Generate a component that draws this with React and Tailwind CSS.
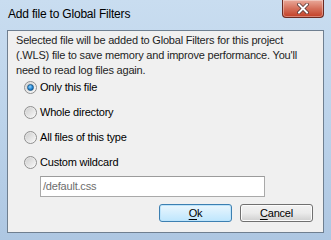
import { useState } from 'react';

const options = [
  'Only this file',
  'Whole directory',
  'All files of this type',
  'Custom wildcard',
];

function Radio({ checked }) {
  return (
    <span className="relative flex items-center justify-center w-[13px] h-[13px] rounded-full border border-[#8f8f8f] bg-gradient-to-br from-[#dcdcdc] to-[#fbfbfb]">
      <span className="w-[9px] h-[9px] rounded-full bg-gradient-to-br from-[#cfcfcf] to-[#f6f6f6]">
        {checked && (
          <span className="block m-[1px] w-[7px] h-[7px] rounded-full border border-[#1e5b8a] bg-[radial-gradient(circle_at_40%_35%,#8fd3ff,#1a7fd0_60%,#0d4f8f)]" />
        )}
      </span>
    </span>
  );
}

export default function App() {
  const [selected, setSelected] = useState(0);

  return (
    <div className="w-[331px] h-[240px] flex flex-col bg-gradient-to-b from-[#c9ddf0] via-[#bcd3ea] to-[#aec7e2] font-['Liberation_Sans',Arial,sans-serif] text-[11px] tracking-[-0.2px] text-black overflow-hidden">
      {/* Title bar */}
      <div className="h-[30px] flex items-start justify-between shrink-0">
        <span className="pl-[8px] pt-[6px] leading-[16px] text-[12px] tracking-[-0.2px] text-black">Add file to Global Filters</span>
        <div className="mr-[7px] w-[42px] h-[18px] flex items-center justify-center rounded-b-[4px] border border-t-0 border-[#6b2a22] bg-gradient-to-b from-[#e9a99a] via-[#d5705b] to-[#c23d24] shadow-[inset_0_0_0_1px_rgba(255,255,255,0.35)]">
          <svg width="12" height="11" viewBox="0 0 12 11">
            <path d="M2 1.5 L10 9.5 M10 1.5 L2 9.5" stroke="#4a2a2a" strokeWidth="3.4" strokeLinecap="square" />
            <path d="M2 1.5 L10 9.5 M10 1.5 L2 9.5" stroke="#ffffff" strokeWidth="2" strokeLinecap="square" />
          </svg>
        </div>
      </div>

      {/* Content */}
      <div className="flex-1 mx-[7px] mb-[7px] border border-[#6f7f90] bg-[#f0f0f0] flex flex-col pl-[8px] pr-[4px] pt-[2px]">
        <p className="leading-[15px] text-[#1e1e1e] whitespace-nowrap">
          Selected file will be added to Global Filters for this project<br />
          (.WLS) file to save memory and improve performance. You'll<br />
          need to read log files again.
        </p>

        <div className="mt-[-3px] flex flex-col pl-[8px]">
          {options.map((label, i) => (
            <label key={label} className="flex items-center gap-[3px] h-[25px]" onClick={() => setSelected(i)}>
              <Radio checked={selected === i} />
              <span className="leading-[15px]">{label}</span>
            </label>
          ))}
        </div>

        <div className="mt-[1px] ml-[24px] w-[225px] h-[21px] border border-[#a9a9a9] border-t-[#9b9b9b] bg-white px-[2px] flex items-center text-[#6d6d6d]">
          /default.css
        </div>

        <div className="mt-[7px] mr-[6px] flex justify-end gap-[8px]">
          <button className="w-[73px] h-[18px] rounded-[3px] border border-[#3c7fb1] bg-gradient-to-b from-[#eaf6fd] to-[#bee6fd] shadow-[inset_0_0_0_1px_#bde4fb] text-[11px] leading-none">
            <span className="underline underline-offset-[2px] decoration-1">O</span>k
          </button>
          <button className="w-[73px] h-[18px] rounded-[3px] border border-[#707070] bg-gradient-to-b from-[#f2f2f2] via-[#ebebeb] to-[#cfcfcf] shadow-[inset_0_0_0_1px_#fcfcfc] text-[11px] leading-none">
            <span className="underline underline-offset-[2px] decoration-1">C</span>ancel
          </button>
        </div>
      </div>
    </div>
  );
}
